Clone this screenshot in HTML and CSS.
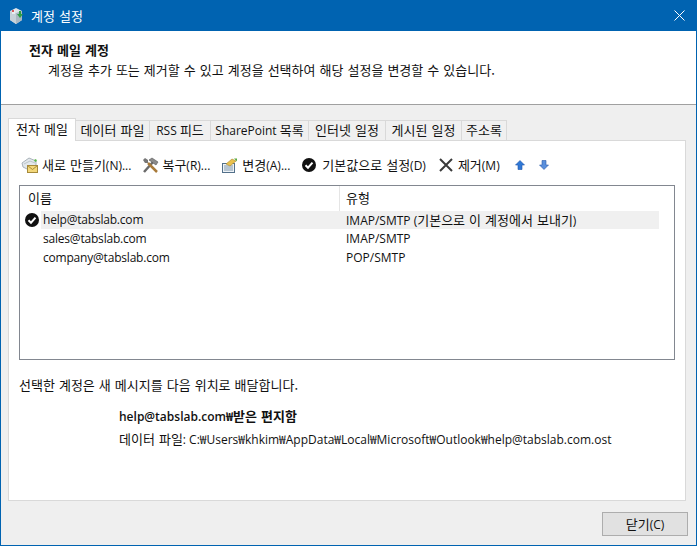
FILE: index.html
```html
<!DOCTYPE html>
<html lang="ko">
<head>
<meta charset="utf-8">
<title>계정 설정</title>
<link rel="stylesheet" href="styles.css">
</head>
<body>
<div class="window">
  <div class="titlebar">
    <svg class="app-icon" width="16" height="18" viewBox="0 0 16 18"><path d="M2 4 8 1l6 3v9l-6 4-6-4z" fill="#dfe5ea"/><path d="M8 6l6-2v9l-6 4z" fill="#a9b8c3"/><path d="M2 4l6 2v11l-6-4z" fill="#c6d1d9"/><rect x="4" y="3" width="3" height="4" fill="#e8eef2"/><rect x="4" y="3" width="2" height="2" fill="#d65a5a"/><path d="M11 4h2v3h2l-3 4-3-4h2z" fill="#2f9e44"/></svg>
    <span class="title k">계정 설정</span>
    <svg class="close" width="11" height="11" viewBox="0 0 11 11"><path d="M.5.5l10 10M10.500.5l-10 10" stroke="#fff" fill="none"/></svg>
  </div>
  <div class="header">
    <div class="h-title k">전자 메일 계정</div>
    <div class="h-sub k">계정을 추가 또는 제거할 수 있고 계정을 선택하여 해당 설정을 변경할 수 있습니다.</div>
  </div>
  <div class="body">
    <div class="tabs">
      <div class="tab active k">전자 메일</div>
      <div class="tab w-data k">데이터 파일</div>
      <div class="tab w-rss">RSS <span class="k">피드</span></div>
      <div class="tab w-sp">SharePoint <span class="k">목록</span></div>
      <div class="tab w-net k">인터넷 일정</div>
      <div class="tab w-pub k">게시된 일정</div>
      <div class="tab w-addr k">주소록</div>
    </div>
    <div class="panel">
      <div class="toolbar">
        <div class="tool t-new"><svg width="18" height="18" viewBox="0 0 18 18"><path d="M1 7 8 2l7 3v4l-7 5-6-3z" fill="#e3e8ec" stroke="#a9b2b9"/><path d="M3 8l6-3 5 2" fill="none" stroke="#bcc5cb"/><path d="M13 4l2-1 1 2-2 1z" fill="#59b947"/><rect x="6.500" y="9.500" width="10" height="7" fill="#f3d77a" stroke="#a68a3a"/><path d="M6.500 9.500l5 4 5-4" fill="none" stroke="#a68a3a"/></svg><span class="label"><span class="k">새로 만들기</span>(N)...</span></div>
        <div class="tool t-fix"><svg width="17" height="17" viewBox="0 0 17 17"><path d="M2 15 11 5" stroke="#6b6b6b" stroke-width="2.500"/><path d="M7 3l3-2 6 4-2 3-3-2-1-1z" fill="#8a8a8a" stroke="#555" stroke-width=".6"/><path d="M15 15 6 6" stroke="#a87a3a" stroke-width="2.500"/><path d="M1 3l2-2 3 2 0 3-3 0z" fill="#777"/></svg><span class="label"><span class="k">복구</span>(R)...</span></div>
        <div class="tool t-chg"><svg width="17" height="17" viewBox="0 0 17 17"><rect x="1.500" y="6.500" width="12" height="9" fill="#eef2f6" stroke="#52708a"/><path d="M3 9h9M3 11h9M3 13h9" stroke="#7f97ac"/><path d="M5 7l6-5 4 2-6 5z" fill="#e9c14e" stroke="#a9862c" stroke-width=".6"/><path d="M13 1.500h3v3z" fill="#5aaa3f"/></svg><span class="label"><span class="k">변경</span>(A)...</span></div>
        <div class="tool t-def"><svg width="14" height="14" viewBox="0 0 14 14"><circle cx="7" cy="7" r="7" fill="#111"/><path d="M3.500 7.200 6 9.700l4.500-5" fill="none" stroke="#fff" stroke-width="2"/></svg><span class="label"><span class="k">기본값으로 설정</span>(D)</span></div>
        <div class="tool t-del"><svg width="14" height="14" viewBox="0 0 14 14"><path d="M1 1l12 12M13 1 1 13" stroke="#3a3a3a" stroke-width="2"/></svg><span class="label"><span class="k">제거</span>(M)</span></div>
        <svg class="arrow a-up" width="10" height="10" viewBox="0 0 10 10"><path d="M5 .5 9.500 5H7v4.500H3V5H.5z" fill="#2f78d6" stroke="#1f55a8" stroke-width=".6"/></svg>
        <svg class="arrow a-down" width="10" height="10" viewBox="0 0 10 10"><path d="M5 9.500 9.500 5H7V.5H3V5H.5z" fill="#5a8fdc" stroke="#2c5aa8" stroke-width=".6"/></svg>
      </div>
      <div class="list">
        <div class="list-head">
          <div class="col-name k">이름</div>
          <div class="col-type k">유형</div>
        </div>
        <div class="row selected">
          <svg class="check" width="14" height="14" viewBox="0 0 14 14"><circle cx="7" cy="7" r="7" fill="#111"/><path d="M3.500 7.200 6 9.700l4.500-5" fill="none" stroke="#fff" stroke-width="2"/></svg>
          <div class="cell-name">help@tabslab.com</div>
          <div class="cell-type">IMAP/SMTP (<span class="k">기본으로 이 계정에서 보내기</span>)</div>
        </div>
        <div class="row">
          <div class="cell-name">sales@tabslab.com</div>
          <div class="cell-type">IMAP/SMTP</div>
        </div>
        <div class="row">
          <div class="cell-name">company@tabslab.com</div>
          <div class="cell-type">POP/SMTP</div>
        </div>
      </div>
      <div class="note k">선택한 계정은 새 메시지를 다음 위치로 배달합니다.</div>
      <div class="dest">
        <div class="dest-main">help@tabslab.com₩<span class="k">받은 편지함</span></div>
        <div class="dest-file"><span class="k">데이터 파일</span>: C:₩Users₩khkim₩AppData₩Local₩Microsoft₩Outlook₩help@tabslab.com.ost</div>
      </div>
    </div>
    <div class="footer"><div class="btn"><span class="k">닫기</span>(C)</div></div>
  </div>
</div>
</body>
</html>
```
FILE: styles.css
```css
* { box-sizing: border-box; }
html, body { margin: 0; padding: 0; }
body { width: 697px; height: 546px; overflow: hidden; font-family: "Open Sans", "Noto Sans CJK KR", sans-serif; font-size: 12px; color: #111; }
.k { font-family: "Noto Sans CJK KR", sans-serif; font-size: 13px; word-spacing: .4px; }
.window { width: 697px; height: 546px; display: flex; flex-direction: column; border: 1px solid #0063b1; border-top: 0; background: #efefef; }
.titlebar { height: 31px; margin: 0 -1px; padding: 0 12px 0 8px; flex: none; background: #0063b1; color: #fff; display: flex; align-items: center; }
.app-icon { margin-right: 7px; }
.title { flex: 1; }
.header { height: 74px; flex: none; background: #fff; border-bottom: 1px solid #a0a0a0; padding: 10px 0 0 28px; }
.h-title { font-weight: 700; line-height: 18px; }
.h-sub { margin: 2px 0 0 19px; line-height: 18px; }
.body { flex: 1; display: flex; flex-direction: column; padding: 13px 8px 0 7px; background: #efefef; }
.tabs { display: flex; height: 22px; flex: none; position: relative; z-index: 1; }
.tab { height: 20px; margin-top: 2px; border: 1px solid #d9d9d9; border-left: 0; border-bottom: 0; background: #f0f0f0; line-height: 18px; white-space: nowrap; text-align: center; }
.tab.active { width: 68px; height: 23px; margin-top: 0; border-left: 1px solid #d9d9d9; background: #fff; line-height: 20px; }
.w-data { width: 74px; }
.w-rss { width: 61px; }
.w-sp { width: 98px; }
.w-net { width: 77px; }
.w-pub { width: 76px; }
.w-addr { width: 45px; }
.panel { height: 361px; flex: none; margin-right: 2px; background: #fff; border: 1px solid #d9d9d9; padding: 0 10px; }
.toolbar { height: 44px; display: flex; align-items: center; padding: 4px 0 0 2px; }
.tool { display: flex; align-items: center; gap: 3px; white-space: nowrap; }
.label { line-height: 18px; }
.t-fix { margin-left: 11px; }
.t-chg { margin-left: 11px; gap: 4px; }
.t-def { margin-left: 12px; gap: 6px; }
.t-del { margin-left: 13px; gap: 5px; }
.a-up { margin-left: 15px; }
.a-down { margin-left: 14px; }
.list { height: 175px; border: 1px solid #828790; }
.list-head { display: flex; height: 25px; line-height: 24px; }
.col-name { width: 320px; padding-left: 8px; border-right: 1px solid #e5e5e5; }
.col-type { padding-left: 6px; }
.row { display: flex; height: 19px; margin-left: 21px; width: 618px; line-height: 17px; position: relative; }
.row.selected { height: 18px; margin-bottom: 1px; background: #f0f0f0; }
.check { position: absolute; left: -16px; top: 2px; }
.cell-name { width: 304px; padding-left: 2px; letter-spacing: -.2px; }
.cell-type { padding-left: 1px; white-space: nowrap; }
.note { margin-top: 16px; line-height: 18px; }
.dest { margin-left: 100px; margin-top: 13px; }
.dest-main { font-weight: 600; line-height: 18px; }
.dest-file { margin-top: 4px; line-height: 18px; white-space: nowrap; }
.footer { flex: 1; display: flex; justify-content: flex-end; align-items: flex-start; padding-top: 11px; }
.btn { width: 86px; height: 24px; background: #e1e1e1; border: 1px solid #adadad; text-align: center; line-height: 21px; }
```
